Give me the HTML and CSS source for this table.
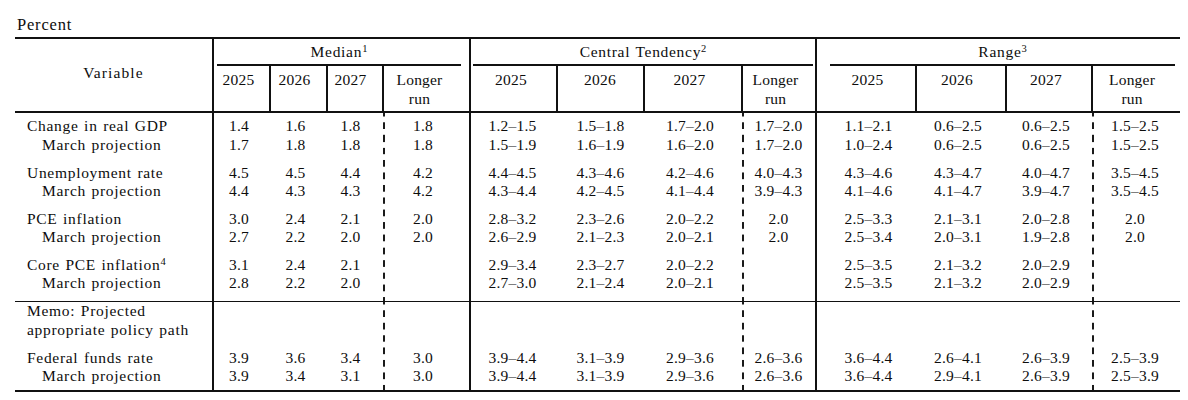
FILE: index.html
```html
<!DOCTYPE html>
<html lang="en">
<head>
<meta charset="utf-8">
<title>Economic projections</title>
<link rel="stylesheet" href="styles.css">
</head>
<body>
<div class="page">
  <div class="caption">Percent</div>
  <table class="proj">
    <colgroup>
      <col class="c-var">
      <col class="c-m1"><col class="c-m2"><col class="c-m3"><col class="c-mlr lr">
      <col class="c-t1"><col class="c-t2"><col class="c-t3"><col class="c-tlr lr">
      <col class="c-r1"><col class="c-r2"><col class="c-r3"><col class="c-rlr lr">
    </colgroup>
    <thead>
      <tr class="h1">
        <th rowspan="2" class="var-h">Variable</th>
        <th colspan="4" class="grp grp-m"><div class="grp-title">Median<sup>1</sup></div></th>
        <th colspan="4" class="grp grp-t"><div class="grp-title">Central Tendency<sup>2</sup></div></th>
        <th colspan="4" class="grp grp-r"><div class="grp-title">Range<sup>3</sup></div></th>
      </tr>
      <tr class="h2">
        <th>2025</th><th>2026</th><th>2027</th><th>Longer<br>run</th>
        <th>2025</th><th>2026</th><th>2027</th><th>Longer<br>run</th>
        <th>2025</th><th>2026</th><th>2027</th><th>Longer<br>run</th>
      </tr>
    </thead>
    <tbody>
      <tr class="first">
        <td class="var">Change in real GDP</td>
        <td>1.4</td><td>1.6</td><td>1.8</td><td>1.8</td>
        <td>1.2–1.5</td><td>1.5–1.8</td><td>1.7–2.0</td><td>1.7–2.0</td>
        <td>1.1–2.1</td><td>0.6–2.5</td><td>0.6–2.5</td><td>1.5–2.5</td>
      </tr>
      <tr>
        <td class="var sub">March projection</td>
        <td>1.7</td><td>1.8</td><td>1.8</td><td>1.8</td>
        <td>1.5–1.9</td><td>1.6–1.9</td><td>1.6–2.0</td><td>1.7–2.0</td>
        <td>1.0–2.4</td><td>0.6–2.5</td><td>0.6–2.5</td><td>1.5–2.5</td>
      </tr>
      <tr class="grp-start">
        <td class="var">Unemployment rate</td>
        <td>4.5</td><td>4.5</td><td>4.4</td><td>4.2</td>
        <td>4.4–4.5</td><td>4.3–4.6</td><td>4.2–4.6</td><td>4.0–4.3</td>
        <td>4.3–4.6</td><td>4.3–4.7</td><td>4.0–4.7</td><td>3.5–4.5</td>
      </tr>
      <tr>
        <td class="var sub">March projection</td>
        <td>4.4</td><td>4.3</td><td>4.3</td><td>4.2</td>
        <td>4.3–4.4</td><td>4.2–4.5</td><td>4.1–4.4</td><td>3.9–4.3</td>
        <td>4.1–4.6</td><td>4.1–4.7</td><td>3.9–4.7</td><td>3.5–4.5</td>
      </tr>
      <tr class="grp-start">
        <td class="var">PCE inflation</td>
        <td>3.0</td><td>2.4</td><td>2.1</td><td>2.0</td>
        <td>2.8–3.2</td><td>2.3–2.6</td><td>2.0–2.2</td><td>2.0</td>
        <td>2.5–3.3</td><td>2.1–3.1</td><td>2.0–2.8</td><td>2.0</td>
      </tr>
      <tr>
        <td class="var sub">March projection</td>
        <td>2.7</td><td>2.2</td><td>2.0</td><td>2.0</td>
        <td>2.6–2.9</td><td>2.1–2.3</td><td>2.0–2.1</td><td>2.0</td>
        <td>2.5–3.4</td><td>2.0–3.1</td><td>1.9–2.8</td><td>2.0</td>
      </tr>
      <tr class="grp-start core">
        <td class="var">Core PCE inflation<sup>4</sup></td>
        <td>3.1</td><td>2.4</td><td>2.1</td><td></td>
        <td>2.9–3.4</td><td>2.3–2.7</td><td>2.0–2.2</td><td></td>
        <td>2.5–3.5</td><td>2.1–3.2</td><td>2.0–2.9</td><td></td>
      </tr>
      <tr class="sep">
        <td class="var sub">March projection</td>
        <td>2.8</td><td>2.2</td><td>2.0</td><td></td>
        <td>2.7–3.0</td><td>2.1–2.4</td><td>2.0–2.1</td><td></td>
        <td>2.5–3.5</td><td>2.1–3.2</td><td>2.0–2.9</td><td></td>
      </tr>
      <tr class="memo">
        <td class="var">Memo: Projected<br>appropriate policy path</td>
        <td></td><td></td><td></td><td></td>
        <td></td><td></td><td></td><td></td>
        <td></td><td></td><td></td><td></td>
      </tr>
      <tr class="grp-start">
        <td class="var">Federal funds rate</td>
        <td>3.9</td><td>3.6</td><td>3.4</td><td>3.0</td>
        <td>3.9–4.4</td><td>3.1–3.9</td><td>2.9–3.6</td><td>2.6–3.6</td>
        <td>3.6–4.4</td><td>2.6–4.1</td><td>2.6–3.9</td><td>2.5–3.9</td>
      </tr>
      <tr class="last">
        <td class="var sub">March projection</td>
        <td>3.9</td><td>3.4</td><td>3.1</td><td>3.0</td>
        <td>3.9–4.4</td><td>3.1–3.9</td><td>2.9–3.6</td><td>2.6–3.6</td>
        <td>3.6–4.4</td><td>2.9–4.1</td><td>2.6–3.9</td><td>2.5–3.9</td>
      </tr>
    </tbody>
  </table>
</div>
</body>
</html>
```

FILE: styles.css
```css
html, body {
  margin: 0;
  background: #fff;
}

body {
  font-family: "Liberation Serif", "Times New Roman", serif;
  color: #0d0d0d;
}

.page {
  padding: 16px 0 0 15px;
  width: 1165px;
}

.caption {
  font-size: 16.5px;
  line-height: 18px;
  letter-spacing: 0.8px;
  padding-left: 2px;
  margin-bottom: 3px;
}

.proj {
  border-collapse: collapse;
  table-layout: fixed;
  width: 1165px;
  font-size: 15.5px;
  line-height: 18.4px;
  border-top: 2px solid #111;
  border-bottom: 2px solid #111;
}

.c-var { width: 198px; }
.c-m1 { width: 57px; }
.c-m2 { width: 57px; }
.c-m3 { width: 56px; }
.c-mlr { width: 87px; }
.c-t1 { width: 87px; }
.c-t2 { width: 87px; }
.c-t3 { width: 98px; }
.c-tlr { width: 74px; }
.c-r1 { width: 100px; }
.c-r2 { width: 90px; }
.c-r3 { width: 86px; }
.c-rlr { width: 88px; }

/* dashed rule in front of each "Longer run" column */
.lr {
  background-image: linear-gradient(to bottom, #1a1a1a 7px, transparent 7px);
  background-size: 2px 12.5px;
  background-repeat: repeat-y;
  background-position: 0 9.5px;
}

th {
  font-weight: normal;
  background: #fff;
  padding: 0;
  letter-spacing: 0.2px;
}

sup {
  font-size: 10.5px;
  line-height: 0;
  vertical-align: 5px;
  letter-spacing: 0;
}

.var-h {
  vertical-align: middle;
  text-align: center;
  letter-spacing: 1.1px;
  padding-bottom: 3px;
  border-right: 2px solid #111;
  border-bottom: 2px solid #111;
}

.grp {
  vertical-align: top;
  padding-top: 4px;
  letter-spacing: 0.7px;
  word-spacing: 1px;
}

.grp-m, .grp-t {
  border-right: 2px solid #111;
}

.grp-title {
  padding-bottom: 3px;
  border-bottom: 2px solid #111;
}

.grp-m .grp-title { margin: 0 8px 0 3px; }
.grp-t .grp-title { margin: 0 2px 0 2px; }
.grp-r .grp-title { margin: 0 5px 0 13px; }

.h2 th {
  vertical-align: top;
  text-align: center;
  padding: 5px 6px 3px 0;
  border-right: 2px solid #111;
  border-bottom: 2px solid #111;
}

.h2 th:last-child { border-right: none; }
.h2 th:nth-child(2) { padding-right: 8px; }
.h2 th:nth-child(3) { padding-right: 9px; }
.h2 th:nth-child(4) { padding-right: 14px; }
.h2 th:nth-child(5) { padding-right: 5px; }
.h2 th:nth-child(6) { padding-right: 1px; }
.h2 th:nth-child(7) { padding-right: 7px; }
.h2 th:nth-child(8) { padding-right: 7px; }
.h2 th:nth-child(9) { padding-right: 0; padding-left: 3px; }
.h2 th:nth-child(10) { padding-right: 8px; }
.h2 th:nth-child(11) { padding-right: 6px; }
.h2 th:nth-child(12) { padding-right: 9px; }

td {
  vertical-align: top;
  text-align: center;
  white-space: nowrap;
  padding: 0 6px 0 0;
  letter-spacing: 0.2px;
}

td:nth-child(4) { padding-right: 9px; }
td:nth-child(6) { padding-right: 3px; }
td:nth-child(7) { padding-right: 0; }
td:nth-child(9) { padding-right: 0; }
td:nth-child(10) { padding-right: 0; padding-left: 4px; }
td:nth-child(13) { padding-right: 2px; }

td:nth-child(5),
td:nth-child(9) {
  border-right: 2px solid #111;
}

td.var {
  text-align: left;
  padding: 0 0 0 12px;
  letter-spacing: 0.7px;
  word-spacing: 1px;
  border-right: 2px solid #111;
}

td.var.sub { padding-left: 27px; }

tr.first td { padding-top: 4px; }
tr.grp-start td { padding-top: 9.6px; }
tr.core td { padding-top: 9.2px; }
tr.sep td {
  padding-bottom: 8.4px;
  border-bottom: 1px solid #111;
}
tr.memo td { padding-top: 0; }
tr.last td { padding-bottom: 4.5px; }
```
